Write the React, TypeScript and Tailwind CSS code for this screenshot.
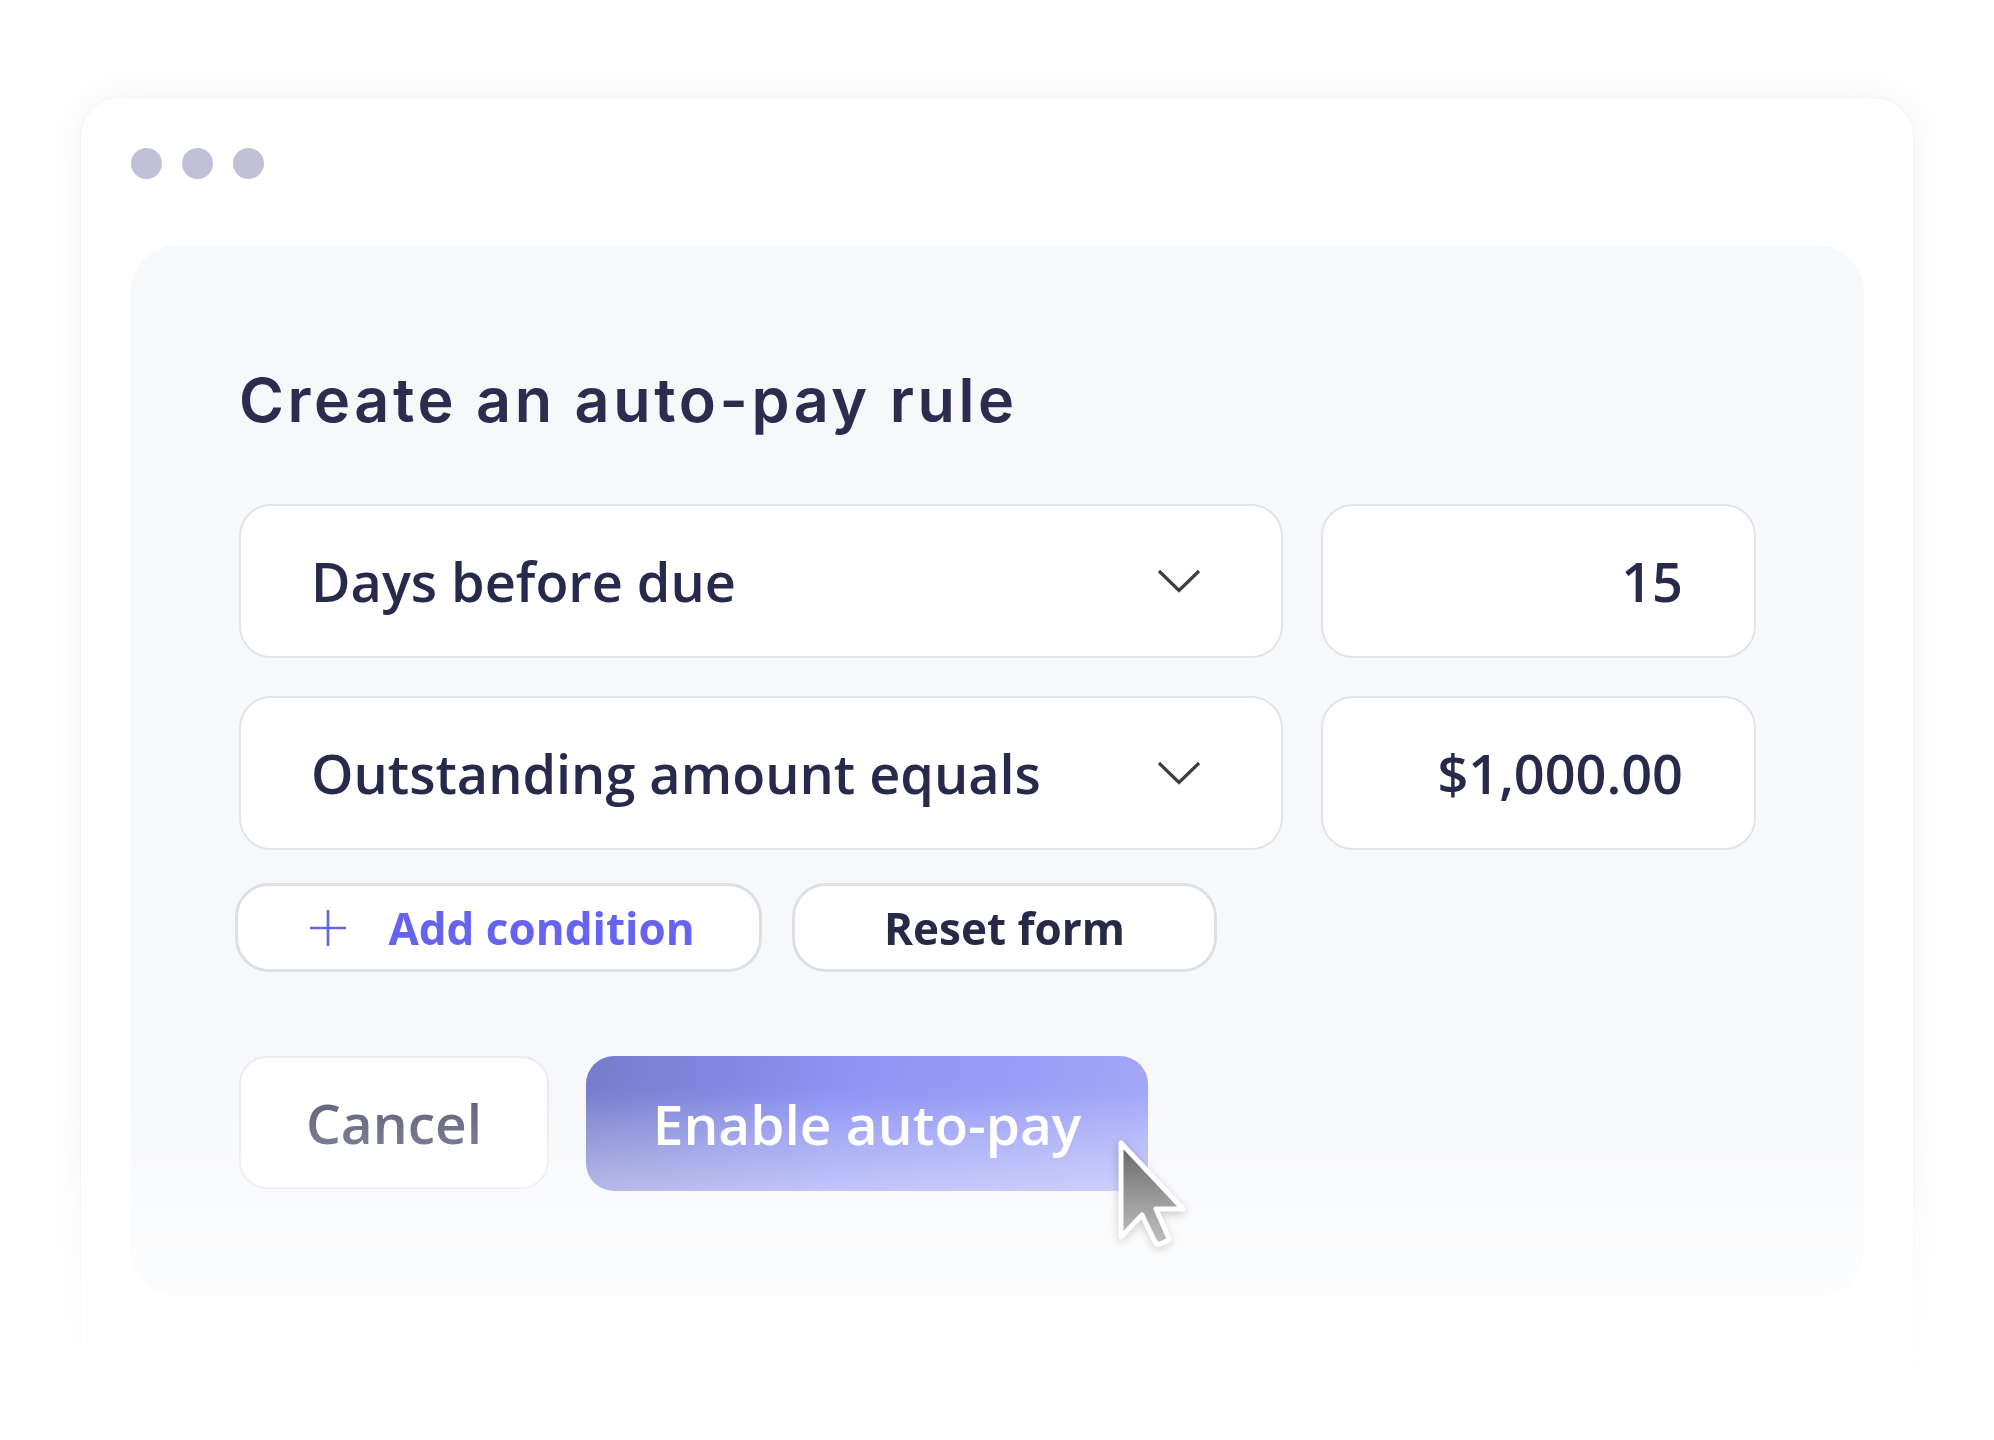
import React from "react";

function Chevron() {
  return (
    <svg width="44" height="24" viewBox="0 0 44 24" fill="none">
      <polyline points="2,2 22,21.5 42,2" stroke="#3d3d48" strokeWidth="3.2" strokeLinecap="butt" strokeLinejoin="miter" />
    </svg>
  );
}

function Plus() {
  return (
    <svg width="36" height="36" viewBox="0 0 36 36" fill="none">
      <line x1="18" y1="0" x2="18" y2="36" stroke="#6663f1" strokeWidth="2.6" />
      <line x1="0" y1="18" x2="36" y2="18" stroke="#6663f1" strokeWidth="2.6" />
    </svg>
  );
}

function Cursor() {
  return (
    <svg width="76" height="116" viewBox="-6 -6 76 116" fill="none" className="drop-shadow-[0_3px_4px_rgba(0,0,0,0.3)]">
      <defs>
        <linearGradient id="cg" x1="0" y1="0" x2="0" y2="1">
          <stop offset="0" stopColor="#454545" />
          <stop offset="1" stopColor="#858585" />
        </linearGradient>
      </defs>
      <path
        d="M0 0 L0 94 L21 72 L34 99 Q36 102 39 101 L46 98 Q49 96 47 93 L35 66 L62 66 Z"
        fill="url(#cg)"
        stroke="#ffffff"
        strokeWidth="5"
        strokeLinejoin="round"
      />
    </svg>
  );
}

const field = "font-['Open_Sans',sans-serif] text-[54px] leading-none font-semibold text-[#282a4b]";

export default function App() {
  return (
    <div className="w-[1994px] h-[1440px] bg-white pt-[57px] pl-[40px] overflow-hidden">
      <div className="w-[1914px] h-[1383px] pt-[40px] px-[40px] [mask-image:linear-gradient(to_bottom,black_75%,transparent_98%)]">
        <div className="h-[1300px] rounded-[40px] bg-white border border-[#f1f2f5] shadow-[0_0_40px_rgba(30,30,60,0.06)] pt-[50px] px-[49px]">
          <div className="flex gap-[20px] pl-[1px]">
            <div className="w-[31px] h-[31px] rounded-full bg-[#c0c1d6]" />
            <div className="w-[31px] h-[31px] rounded-full bg-[#c0c1d6]" />
            <div className="w-[31px] h-[31px] rounded-full bg-[#c0c1d6]" />
          </div>
          <div className="mt-[66px] h-[1052px] rounded-[48px] bg-[#f7f8fa] pt-[125px] pl-[109px]">
            <h1 className="font-['Inter',sans-serif] text-[61px] leading-none font-semibold text-[#2b2c4e] tracking-[3.6px]">
              Create an auto-pay rule
            </h1>
            <div className="mt-[73px] grid grid-cols-[1044px_435px] gap-x-[38px] gap-y-[38px]">
              <div className="h-[154px] rounded-[32px] bg-white border-2 border-[#e3e4e8] flex items-center justify-between pl-[70px] pr-[80px]">
                <span className={field}>Days before due</span>
                <Chevron />
              </div>
              <div className="h-[154px] rounded-[32px] bg-white border-2 border-[#e3e4e8] flex items-center justify-end pr-[71px]">
                <span className={field}>15</span>
              </div>
              <div className="h-[154px] rounded-[32px] bg-white border-2 border-[#e3e4e8] flex items-center justify-between pl-[70px] pr-[80px]">
                <span className={field}>Outstanding amount equals</span>
                <Chevron />
              </div>
              <div className="h-[154px] rounded-[32px] bg-white border-2 border-[#e3e4e8] flex items-center justify-end pr-[71px]">
                <span className={field}>$1,000.00</span>
              </div>
            </div>
            <div className="mt-[33px] flex gap-[30px] -ml-[4px]">
              <div className="w-[527px] h-[89px] rounded-[34px] bg-white border-[3px] border-[#dedfe4] flex items-center justify-center gap-[42px] pl-[8px]">
                <Plus />
                <span className="font-['Open_Sans',sans-serif] text-[44px] leading-none font-bold text-[#6663f1]">Add condition</span>
              </div>
              <div className="w-[425px] h-[89px] rounded-[34px] bg-white border-[3px] border-[#dedfe4] flex items-center justify-center">
                <span className="font-['Open_Sans',sans-serif] text-[44px] leading-none font-bold text-[#272946]">Reset form</span>
              </div>
            </div>
            <div className="mt-[84px] flex items-start gap-[37px]">
              <div className="w-[310px] h-[133px] rounded-[28px] bg-white border-2 border-[#ebebef] flex items-center justify-center">
                <span className="font-['Open_Sans',sans-serif] text-[55px] leading-none font-semibold text-[#61617b]">Cancel</span>
              </div>
              <div className="relative">
                <div className="relative w-[562px] h-[135px] rounded-[28px] overflow-hidden bg-[linear-gradient(100deg,#767bcc_0%,#8d93f4_45%,#a4a7f8_100%)] flex items-center justify-center">
                  <div className="absolute inset-0 bg-[linear-gradient(to_bottom,rgba(255,255,255,0)_20%,rgba(255,255,255,0.22)_100%)]" />
                  <span className="relative font-['Open_Sans',sans-serif] text-[55px] leading-none font-semibold text-white">Enable auto-pay</span>
                </div>
                <div className="absolute left-[529px] top-[81px]">
                  <Cursor />
                </div>
              </div>
            </div>
          </div>
        </div>
      </div>
    </div>
  );
}
